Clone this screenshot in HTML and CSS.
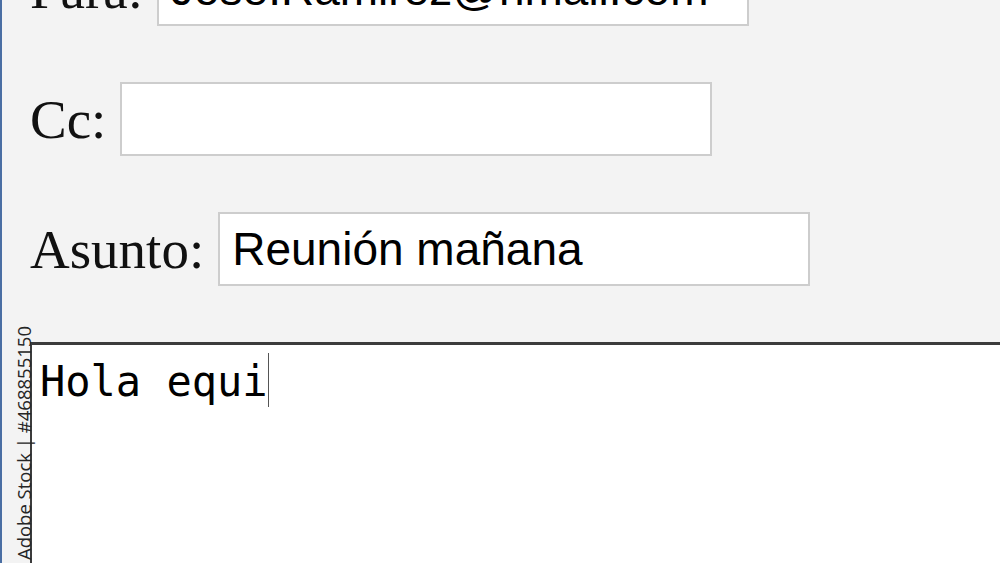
FILE: index.html
```html
<!DOCTYPE html>
<html lang="es">
<head>
    <meta charset="UTF-8">
    <meta name="viewport" content="width=device-width, initial-scale=1.0">
    <title>Nuevo mensaje</title>
    <link rel="stylesheet" href="styles.css">
</head>
<body>

<div class="page">
    <form class="mail-form">
        <div class="field-row">
            <label for="para">Para:</label>
            <input id="para" type="text" value="Jose.Ramirez@hmail.com">
        </div>
        <div class="field-row">
            <label for="cc">Cc:</label>
            <input id="cc" type="text" value="">
        </div>
        <div class="field-row">
            <label for="asunto">Asunto:</label>
            <input id="asunto" type="text" value="Reunión mañana">
        </div>

        <div class="message-box">
            <span class="message-text">Hola equi</span><span class="caret"></span>
        </div>
    </form>
</div>

<div class="stock-tag">Adobe Stock | #468855150</div>

</body>
</html>
```

FILE: styles.css
```css
* {
    margin: 0;
    padding: 0;
    box-sizing: border-box;
}
html, body {
    height: 100%;
    overflow: hidden;
}
body {
    background: #f3f3f3;
    border-left: 2px solid #4a6ea3;
    font-family: "Liberation Serif", "Times New Roman", serif;
}
.page {
    padding-left: 28px;
}
.mail-form {
    margin-top: -48px;
    display: flex;
    flex-direction: column;
    gap: 56px;
}
.field-row {
    display: flex;
    align-items: center;
    gap: 14px;
}
.field-row label {
    font-size: 55px;
    line-height: 1;
    color: #111;
}
.field-row input {
    width: 592px;
    height: 74px;
    padding: 0 12px;
    border: 2px solid #cdcdcd;
    background: #fff;
    font-family: "Liberation Sans", Arial, sans-serif;
    font-size: 46px;
    color: #000;
    outline: none;
}

/* Message body */
.message-box {
    width: 1100px;
    height: 400px;
    background: #fff;
    border-top: 3px solid #3c3c3c;
    border-left: 2px solid #3c3c3c;
    padding: 12px 8px;
    font-family: "DejaVu Sans Mono", "Liberation Mono", monospace;
    font-size: 42px;
    color: #000;
    display: flex;
    align-items: flex-start;
}
.caret {
    display: inline-block;
    width: 1px;
    height: 54px;
    margin-top: -4px;
    background: #555;
}

.stock-tag {
    position: absolute;
    left: 11px;
    bottom: 3px;
    writing-mode: vertical-rl;
    transform: rotate(180deg);
    font-family: "Open Sans", "Liberation Sans", sans-serif;
    font-size: 18.5px;
    color: #262626;
    white-space: nowrap;
}
```
